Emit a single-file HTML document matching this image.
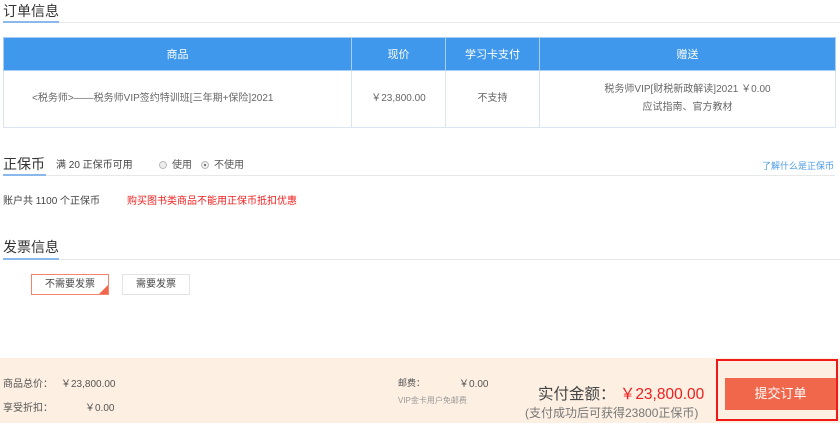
<!DOCTYPE html>
<html><head><meta charset="utf-8"><style>
*{margin:0;padding:0;box-sizing:border-box}
body{width:840px;height:423px;background:#fff;font-family:"Liberation Sans","Noto Sans CJK SC",sans-serif;color:#555;position:relative;overflow:hidden;font-size:10px}
.a{position:absolute;white-space:nowrap}
.h{font-size:14px;color:#333}
.line{position:absolute;height:1px;background:#e8e8e8}
.ul{position:absolute;height:2px;background:#8ab8ea}
table{position:absolute;left:3px;top:37px;width:833px;border-collapse:collapse;font-size:10px}
th{background:#3f98eb;color:#fff;font-weight:normal;height:33px;border:1px solid #a9cdf3;font-size:11px}
td{height:57px;border:1px solid #dbe5f2;text-align:center;color:#666;line-height:18px}
.r{display:inline-block;width:8px;height:8px;border:1px solid #bbb;border-radius:50%;background:#eee;vertical-align:-1px;margin-right:5px;position:relative}
.r.on::after{content:"";position:absolute;left:2px;top:2px;width:2px;height:2px;border-radius:50%;background:#555}
</style></head><body>
<div class="a h" style="left:3px;top:1px">订单信息</div>
<div class="line" style="left:3px;top:22px;width:837px"></div>
<div class="ul" style="left:3px;top:21px;width:56px"></div>
<table>
<tr><th style="width:348px">商品</th><th style="width:94px">现价</th><th style="width:94px">学习卡支付</th><th>赠送</th></tr>
<tr><td style="text-align:left;padding-left:28px">&lt;税务师&gt;——税务师VIP签约特训班[三年期+保险]2021</td><td>￥23,800.00</td><td>不支持</td><td>税务师VIP[财税新政解读]2021 ￥0.00<br>应试指南、官方教材</td></tr>
</table>
<div class="a h" style="left:3px;top:154px">正保币</div>
<div class="a" style="left:56px;top:156px;color:#444">满 20 正保币可用</div>
<div class="a" style="left:159px;top:156px"><span class="r"></span>使用</div>
<div class="a" style="left:201px;top:156px"><span class="r on"></span>不使用</div>
<div class="a" style="left:762px;top:159px;color:#4a9be8;font-size:9px">了解什么是正保币</div>
<div class="line" style="left:3px;top:175px;width:832px"></div>
<div class="ul" style="left:3px;top:174px;width:43px"></div>
<div class="a" style="left:3px;top:192px;color:#444">账户共 1100 个正保币</div>
<div class="a" style="left:127px;top:192px;color:#f02020">购买图书类商品不能用正保币抵扣优惠</div>
<div class="a h" style="left:3px;top:237px">发票信息</div>
<div class="line" style="left:3px;top:259px;width:837px"></div>
<div class="ul" style="left:3px;top:258px;width:56px"></div>
<div class="a" style="left:31px;top:274px;width:78px;height:21px;border:1px solid #f5826d;text-align:center;line-height:19px;color:#444">不需要发票<div style="position:absolute;right:0;bottom:0;width:0;height:0;border-left:9px solid transparent;border-bottom:9px solid #f0674b"></div></div>
<div class="a" style="left:122px;top:274px;width:68px;height:21px;border:1px solid #e3e3e3;text-align:center;line-height:19px;color:#444">需要发票</div>
<div style="position:absolute;left:0;top:358px;width:840px;height:65px;background:#fdf0e3"></div>
<div class="a" style="left:3px;top:375px;color:#555">商品总价：</div>
<div class="a" style="left:61px;top:375px;color:#555">￥23,800.00</div>
<div class="a" style="left:3px;top:399px;color:#555">享受折扣：</div>
<div class="a" style="left:85px;top:399px;color:#555">￥0.00</div>
<div class="a" style="left:398px;top:376px;font-size:9px">邮费：</div>
<div class="a" style="left:459px;top:375px">￥0.00</div>
<div class="a" style="left:398px;top:395px;font-size:8px;color:#999">VIP金卡用户免邮费</div>
<div class="a" style="left:538px;top:382px;font-size:15.5px;color:#444">实付金额： <span style="color:#f01d1d">￥23,800.00</span></div>
<div class="a" style="left:525px;top:404px;font-size:12px;color:#777">(支付成功后可获得23800正保币)</div>
<div class="a" style="left:716px;top:359px;width:122px;height:62px;border:2px solid #f01818"></div>
<div class="a" style="left:725px;top:378px;width:111px;height:32px;background:#f0674b;color:#fff;font-size:13px;text-align:center;line-height:32px">提交订单</div>
</body></html>
